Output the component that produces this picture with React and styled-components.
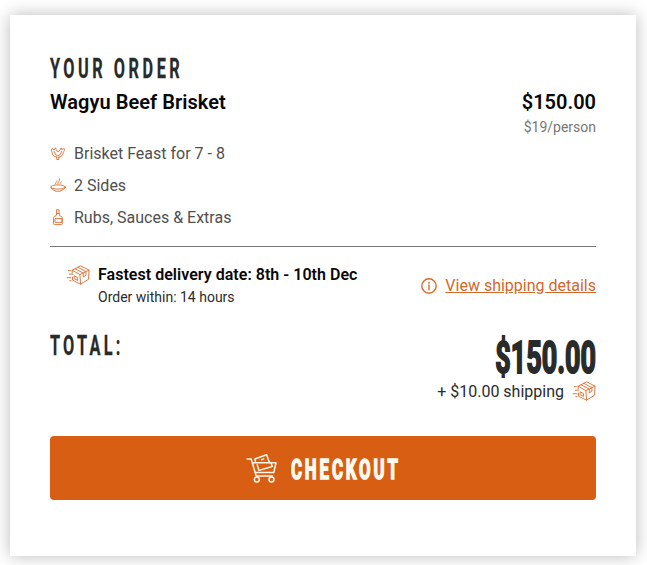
import styled, { createGlobalStyle } from "styled-components";

const extras = [
	{ icon: <ChickenIcon />, label: "Brisket Feast for 7 - 8" },
	{ icon: <BowlIcon />, label: "2 Sides" },
	{ icon: <BottleIcon />, label: "Rubs, Sauces & Extras" },
];

export default function App() {
	return (
		<>
			<GlobalStyle />
			<Card>
				<Heading>
					<Condensed $size={28} $scale={0.58} $spacing={6.1} $stroke={0.3}>
						YOUR ORDER
					</Condensed>
				</Heading>

				<Product>
					<ProductName>Wagyu Beef Brisket</ProductName>
					<Price>
						<strong>$150.00</strong>
						<span>$19/person</span>
					</Price>
				</Product>

				<Extras>
					{extras.map((extra) => (
						<Extra key={extra.label}>
							{extra.icon}
							{extra.label}
						</Extra>
					))}
				</Extras>

				<Delivery>
					<BoxIcon />
					<DeliveryText>
						<strong>Fastest delivery date: 8th - 10th Dec</strong>
						<span>Order within: 14 hours</span>
					</DeliveryText>
					<InfoIcon />
					<DetailsLink href="#">View shipping details</DetailsLink>
				</Delivery>

				<Total>
					<Condensed $size={28} $scale={0.58} $spacing={5.6} $stroke={0.3}>
						TOTAL:
					</Condensed>
					<TotalPrice>
						<Condensed $size={45} $scale={0.6} $spacing={0} $stroke={2} $right>
							$150.00
						</Condensed>
					</TotalPrice>
				</Total>
				<Shipping>
					+ $10.00 shipping
					<BoxIcon />
				</Shipping>

				<CheckoutButton>
					<CartIcon />
					<ButtonLabel>
						<Condensed $size={27} $scale={0.62} $spacing={4.7} $stroke={1.7}>
							CHECKOUT
						</Condensed>
					</ButtonLabel>
				</CheckoutButton>
			</Card>
		</>
	);
}

// Icons
function ChickenIcon() {
	return (
		<LineIcon width="16" height="16" viewBox="0 0 16 16">
			<path d="M6.8 12.2C3.9 11.8 2 9.8 2.1 7.1C1.1 6 1.2 4.5 2 3.5L4 5.1C4.4 4 4.9 3.4 5.5 2.8L6.4 5.5L8 6.8L9.8 5.3L11.2 2.8L11.7 4.5L14.2 3.5C15 5.2 13.8 6.4 13.3 7.3C13.3 10 11.5 11.9 8.7 12.3" />
			<path d="M4.2 6.4L5.6 9.5L7.8 11L10.5 9.2L11.7 6.3M6.8 12V14.5H8.8V12" />
		</LineIcon>
	);
}

function BowlIcon() {
	return (
		<LineIcon width="16" height="16" viewBox="0 0 16 16">
			<ellipse cx="8" cy="10" rx="7.3" ry="2.1" />
			<path d="M.8 10.4C1.4 12.4 4 13.2 5.4 13.6V14.2H10.6V13.6C12.4 13.2 14.7 12.2 15.2 10.4M5.3 7C5.1 5.4 7.2 5.3 7 3.9M7.8 6.8C7.7 4.9 9.9 4.4 9.5 1.9M10 7C11 6.2 10.4 5.4 11.2 4.6" />
		</LineIcon>
	);
}

function BottleIcon() {
	return (
		<LineIcon width="16" height="16" viewBox="0 0 16 16">
			<path d="M6.7 .8H9.1V4.8L9.6 6.6C11.8 7.5 12.3 8 12.3 9.2V14.6C12.3 15.1 12 15.4 11.6 15.4H4.3C3.8 15.4 3.5 15.1 3.5 14.6V9.2C3.5 8 4.1 7.5 6.2 6.6L6.7 4.8ZM6.5 4.6H9.3M5.4 9.6H12V13.3H5.4Z" />
		</LineIcon>
	);
}

function BoxIcon() {
	return (
		<LineIcon width="24" height="20" viewBox="0 0 24 20">
			<path d="M6.2 5.3L14.6 .8L23 5.1L22.6 14.2L14.6 19.2L6.5 15.2V12.2M6.2 5.3V8M6.2 5.3L13.9 9.6L23 5.1M13.9 9.6L14.6 19.2M9 3.8L17.2 8V11.9L19.9 10.3V6.6L11.8 2.3M8.5 13.8L11.6 15.4V12.6L8.5 11Z" />
			<path d="M2.4 5.6H4.4M3.4 9.2H6.8M1.2 12.7H5M3.8 15.7H5" />
		</LineIcon>
	);
}

function InfoIcon() {
	return (
		<LineIcon width="16" height="16" viewBox="0 0 16 16" $weight={1.4}>
			<circle cx="8" cy="8" r="7.2" />
			<path d="M8 7V11.8M8 4.2V5.2" />
		</LineIcon>
	);
}

function CartIcon() {
	return (
		<LineIcon width="32" height="31" viewBox="0 0 32 31" $color="#fff7e8" $weight={1.5}>
			<path d="M1 6H5.2L10.2 23H26.5M6.6 9.8H30L27.8 19.5H9.4" />
			<path d="M9.4 8L8.8 6L20.6 1.8L23.3 9.2M11.2 11.6L12.9 17.4L26.3 13.5L25.2 10.5" />
			<path d="M15.5 6.7L17.8 5.9" />
			<circle cx="10.8" cy="26.6" r="2.5" />
			<circle cx="25.5" cy="26.6" r="2.5" />
		</LineIcon>
	);
}

// UI
const GlobalStyle = createGlobalStyle`
	* {
		box-sizing: border-box;
	}

	body {
		min-height: 100vh;
		margin: 0;
		padding: 15px 0 0 10px;
		background-color: #ffffff;
		font-family: Roboto, sans-serif;
	}
`;

const Card = styled.main`
	width: 626px;
	height: 541px;
	padding: 40px 40px 0;
	background-color: #ffffff;
	box-shadow: 0 0 16px rgba(0, 0, 0, 0.27);
	display: flex;
	flex-direction: column;
`;

const LineIcon = styled.svg`
	flex-shrink: 0;
	fill: none;
	stroke: ${(props) => props.$color || "#d96b2b"};
	stroke-width: ${(props) => props.$weight || 0.9};
	stroke-linecap: round;
	stroke-linejoin: round;
`;

const Condensed = styled.span`
	display: block;
	white-space: nowrap;
	font-size: ${(props) => props.$size}px;
	font-weight: 700;
	line-height: 1;
	letter-spacing: ${(props) => props.$spacing}px;
	-webkit-text-stroke: ${(props) => props.$stroke || 0}px currentColor;
	transform: scaleX(${(props) => props.$scale});
	transform-origin: ${(props) => (props.$right ? "right" : "left")} center;
`;

const Heading = styled.h2`
	height: 35px;
	margin: 0;
	color: #292a2a;
`;

const Product = styled.div`
	display: flex;
	justify-content: space-between;
	height: 47px;
`;

const ProductName = styled.h3`
	margin: 0;
	color: #080808;
	font-size: 20px;
	font-weight: 600;
	line-height: 24px;
	letter-spacing: 0.05px;
`;

const Price = styled.div`
	display: flex;
	flex-direction: column;
	align-items: flex-end;

	strong {
		color: #080808;
		font-size: 20px;
		font-weight: 600;
		line-height: 24px;
	}

	span {
		margin-top: 3px;
		color: #777777;
		font-size: 14px;
		line-height: 20px;
	}
`;

const Extras = styled.ul`
	height: 110px;
	margin: 0;
	padding: 0;
	border-bottom: 1px solid #777777;
	list-style: none;
`;

const Extra = styled.li`
	display: flex;
	align-items: center;
	gap: 8px;
	height: 32px;
	color: #4f4f4f;
	font-size: 16px;
`;

const Delivery = styled.div`
	display: flex;
	height: 83px;
	padding: 18px 0 0 16px;

	> svg:first-child {
		margin-right: 8px;
	}

	> svg:nth-of-type(2) {
		margin: 13px 8px 0 auto;
	}
`;

const DeliveryText = styled.div`
	display: flex;
	flex-direction: column;

	strong {
		color: #080808;
		font-size: 16px;
		font-weight: 600;
		line-height: 20px;
		letter-spacing: 0.03px;
	}

	span {
		margin-top: 2px;
		color: #2b2b2b;
		font-size: 14px;
		line-height: 20px;
	}
`;

const DetailsLink = styled.a`
	margin-top: 10px;
	color: #d4672a;
	font-size: 16px;
	line-height: 22px;
`;

const Total = styled.div`
	display: flex;
	justify-content: space-between;
	height: 50px;
	color: #292a2a;
	padding-top: 2px;
`;

const TotalPrice = styled.div`
	padding-top: 3px;
`;

const Shipping = styled.div`
	display: flex;
	align-items: center;
	justify-content: flex-end;
	gap: 8px;
	height: 22px;
	color: #2b2b2b;
	font-size: 16px;
`;

const CheckoutButton = styled.button`
	display: flex;
	align-items: center;
	width: 100%;
	height: 64px;
	margin-top: 34px;
	padding: 0 0 0 196px;
	border: none;
	border-radius: 4px;
	background-color: #d85e14;
	color: #fffaf0;
	font-family: inherit;
	cursor: pointer;
`;

const ButtonLabel = styled.span`
	width: 108px;
	margin-left: 13px;
	padding-top: 4px;
`;
